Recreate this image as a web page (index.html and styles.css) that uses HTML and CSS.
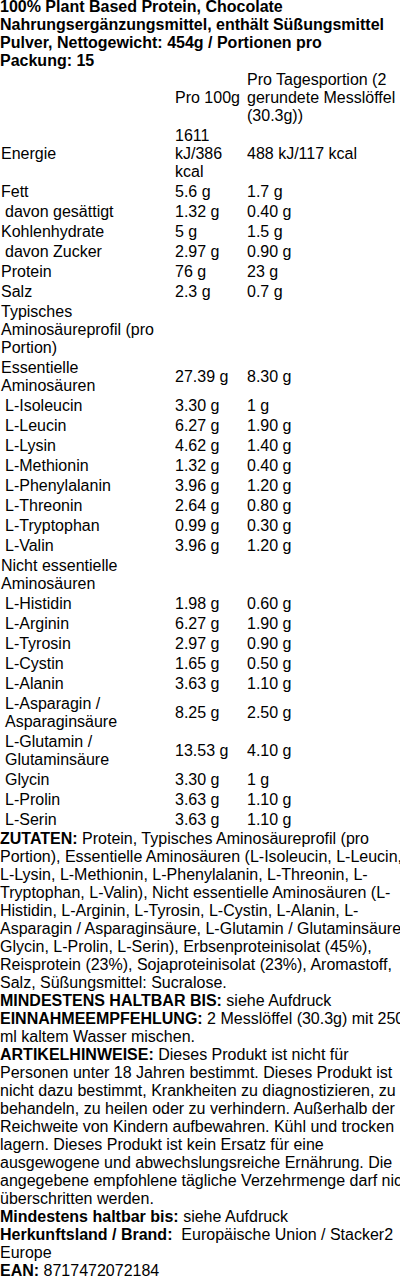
FILE: index.html
```html
<!DOCTYPE html>
<html lang="de">
<head>
<meta charset="utf-8">
<title>100% Plant Based Protein</title>
<link rel="stylesheet" href="styles.css">
</head>
<body>
<div class="sheet">
  <div class="title">100% Plant Based Protein, Chocolate Nahrungsergänzungsmittel, enthält Süßungsmittel Pulver, Nettogewicht: 454g / Portionen pro Packung: 15</div>
  <table class="nutri">
    <tbody>
      <tr><td class="c1"></td><td class="c2">Pro 100g</td><td class="c3">Pro Tagesportion (2 gerundete Messlöffel (30.3g))</td></tr>
      <tr><td class="c1">Energie</td><td class="c2">1611 kJ/386 kcal</td><td class="c3">488 kJ/117 kcal</td></tr>
      <tr><td class="c1">Fett</td><td class="c2">5.6 g</td><td class="c3">1.7 g</td></tr>
      <tr><td class="c1 sub">davon gesättigt</td><td class="c2">1.32 g</td><td class="c3">0.40 g</td></tr>
      <tr><td class="c1">Kohlenhydrate</td><td class="c2">5 g</td><td class="c3">1.5 g</td></tr>
      <tr><td class="c1 sub">davon Zucker</td><td class="c2">2.97 g</td><td class="c3">0.90 g</td></tr>
      <tr><td class="c1">Protein</td><td class="c2">76 g</td><td class="c3">23 g</td></tr>
      <tr><td class="c1">Salz</td><td class="c2">2.3 g</td><td class="c3">0.7 g</td></tr>
      <tr><td class="c1">Typisches Aminosäureprofil (pro Portion)</td><td class="c2"></td><td class="c3"></td></tr>
      <tr><td class="c1">Essentielle Aminosäuren</td><td class="c2">27.39 g</td><td class="c3">8.30 g</td></tr>
      <tr><td class="c1 sub">L-Isoleucin</td><td class="c2">3.30 g</td><td class="c3">1 g</td></tr>
      <tr><td class="c1 sub">L-Leucin</td><td class="c2">6.27 g</td><td class="c3">1.90 g</td></tr>
      <tr><td class="c1 sub">L-Lysin</td><td class="c2">4.62 g</td><td class="c3">1.40 g</td></tr>
      <tr><td class="c1 sub">L-Methionin</td><td class="c2">1.32 g</td><td class="c3">0.40 g</td></tr>
      <tr><td class="c1 sub">L-Phenylalanin</td><td class="c2">3.96 g</td><td class="c3">1.20 g</td></tr>
      <tr><td class="c1 sub">L-Threonin</td><td class="c2">2.64 g</td><td class="c3">0.80 g</td></tr>
      <tr><td class="c1 sub">L-Tryptophan</td><td class="c2">0.99 g</td><td class="c3">0.30 g</td></tr>
      <tr><td class="c1 sub">L-Valin</td><td class="c2">3.96 g</td><td class="c3">1.20 g</td></tr>
      <tr><td class="c1">Nicht essentielle Aminosäuren</td><td class="c2"></td><td class="c3"></td></tr>
      <tr><td class="c1 sub">L-Histidin</td><td class="c2">1.98 g</td><td class="c3">0.60 g</td></tr>
      <tr><td class="c1 sub">L-Arginin</td><td class="c2">6.27 g</td><td class="c3">1.90 g</td></tr>
      <tr><td class="c1 sub">L-Tyrosin</td><td class="c2">2.97 g</td><td class="c3">0.90 g</td></tr>
      <tr><td class="c1 sub">L-Cystin</td><td class="c2">1.65 g</td><td class="c3">0.50 g</td></tr>
      <tr><td class="c1 sub">L-Alanin</td><td class="c2">3.63 g</td><td class="c3">1.10 g</td></tr>
      <tr><td class="c1 sub">L-Asparagin / Asparaginsäure</td><td class="c2">8.25 g</td><td class="c3">2.50 g</td></tr>
      <tr><td class="c1 sub">L-Glutamin / Glutaminsäure</td><td class="c2">13.53 g</td><td class="c3">4.10 g</td></tr>
      <tr><td class="c1 sub">Glycin</td><td class="c2">3.30 g</td><td class="c3">1 g</td></tr>
      <tr><td class="c1 sub">L-Prolin</td><td class="c2">3.63 g</td><td class="c3">1.10 g</td></tr>
      <tr><td class="c1 sub">L-Serin</td><td class="c2">3.63 g</td><td class="c3">1.10 g</td></tr>
    </tbody>
  </table>
  <p class="info"><b>ZUTATEN:</b> Protein, Typisches Aminosäureprofil (pro Portion), Essentielle Aminosäuren (L-Isoleucin, L-Leucin, L-Lysin, L-Methionin, L-Phenylalanin, L-Threonin, L-Tryptophan, L-Valin), Nicht essentielle Aminosäuren (L-Histidin, L-Arginin, L-Tyrosin, L-Cystin, L-Alanin, L-Asparagin / Asparaginsäure, L-Glutamin / Glutaminsäure, Glycin, L-Prolin, L-Serin), Erbsenproteinisolat (45%), Reisprotein (23%), Sojaproteinisolat (23%), Aromastoff, Salz, Süßungsmittel: Sucralose.</p>
  <p class="info"><b>MINDESTENS HALTBAR BIS:</b> siehe Aufdruck</p>
  <p class="info"><b>EINNAHMEEMPFEHLUNG:</b> 2 Messlöffel (30.3g) mit 250 ml kaltem Wasser mischen.</p>
  <p class="info"><b>ARTIKELHINWEISE:</b> Dieses Produkt ist nicht für Personen unter 18 Jahren bestimmt. Dieses Produkt ist nicht dazu bestimmt, Krankheiten zu diagnostizieren, zu behandeln, zu heilen oder zu verhindern. Außerhalb der Reichweite von Kindern aufbewahren. Kühl und trocken lagern. Dieses Produkt ist kein Ersatz für eine ausgewogene und abwechslungsreiche Ernährung. Die angegebene empfohlene tägliche Verzehrmenge darf nicht überschritten werden.</p>
  <p class="info"><b>Mindestens haltbar bis:</b> siehe Aufdruck</p>
  <p class="info"><b>Herkunftsland / Brand:</b>&nbsp; Europäische Union / Stacker2 Europe</p>
  <p class="info"><b>EAN:</b> 8717472072184</p>
</div>
</body>
</html>
```

FILE: styles.css
```css
html, body {
  margin: 0;
  padding: 0;
  background: #ffffff;
  overflow-x: hidden;
}

body {
  font-family: "Liberation Sans", Arial, sans-serif;
  font-size: 16px;
  line-height: normal;
  color: #000000;
}

.sheet {
  width: 420px;
  margin-top: -2px;
}

.title {
  font-weight: bold;
  width: 392px;
  line-height: normal;
}

.nutri {
  border-collapse: collapse;
  border-spacing: 0;
  width: 400px;
  font-size: 16px;
  line-height: 18px;
}

.nutri td {
  padding: 1px;
  vertical-align: middle;
  text-align: left;
}

.nutri .c1 {
  width: 172px;
}

.nutri .c2 {
  width: 70px;
}

.nutri .sub {
  padding-left: 5px;
  width: 168px;
}

.info {
  margin: 0;
  line-height: normal;
}

.info b {
  font-weight: bold;
}
```
